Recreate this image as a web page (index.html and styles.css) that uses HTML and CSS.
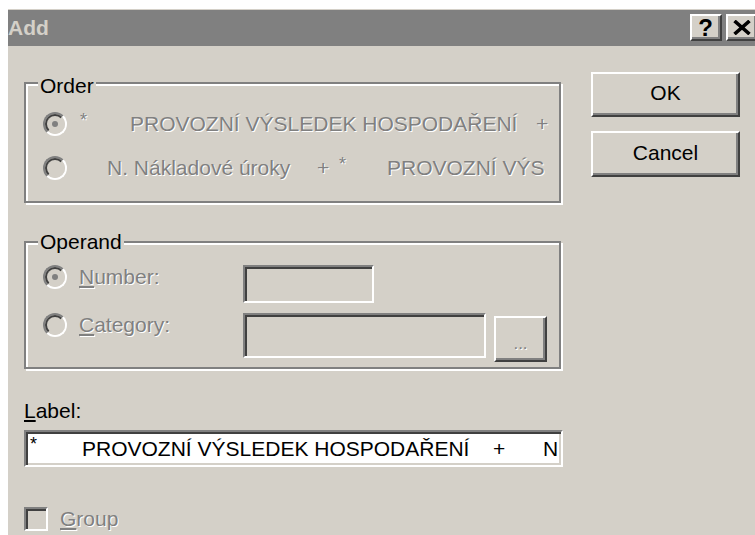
FILE: index.html
```html
<!DOCTYPE html>
<html lang="cs">
<head>
<meta charset="utf-8">
<title>Add</title>
<link rel="stylesheet" href="styles.css">
</head>
<body>
<div class="window">
  <div class="titlebar">
    <span class="title">Add</span>
    <div class="caption-buttons">
      <span class="cap-btn help">?</span>
      <span class="cap-btn close">
        <svg width="18" height="15" viewBox="0 0 18 15" aria-hidden="true">
          <path d="M1.5 1 L16.5 14 M16.5 1 L1.5 14" stroke="#000" stroke-width="3.6" fill="none"/>
        </svg>
      </span>
    </div>
  </div>

  <div class="client">
    <div class="main">
      <fieldset class="group order">
        <legend><span class="legend-text">Order</span></legend>
        <div class="opt">
          <span class="radio checked"><span class="radio-in"></span></span>
          <span class="opt-text">
            <span class="cell w-ast"><span class="ast">*</span></span><span class="cell w-main">PROVOZNÍ VÝSLEDEK HOSPODAŘENÍ</span><span class="cell">+</span>
          </span>
        </div>
        <div class="opt">
          <span class="radio"><span class="radio-in"></span></span>
          <span class="opt-text">
            <span class="cell w-lead"></span><span class="cell w-cost">N. Nákladové úroky</span><span class="cell w-plus">+</span><span class="cell w-ast2"><span class="ast">*</span></span><span class="cell">PROVOZNÍ VÝS</span>
          </span>
        </div>
      </fieldset>

      <fieldset class="group operand">
        <legend>Operand</legend>
        <div class="field-row">
          <div class="choice">
            <span class="radio checked"><span class="radio-in"></span></span>
            <span class="choice-text"><u>N</u>umber:</span>
          </div>
          <span class="edit edit-number"></span>
        </div>
        <div class="field-row second">
          <div class="choice">
            <span class="radio"><span class="radio-in"></span></span>
            <span class="choice-text"><u>C</u>ategory:</span>
          </div>
          <span class="edit edit-category"></span>
          <span class="btn browse"><span class="dots">...</span></span>
        </div>
      </fieldset>

      <div class="caption"><u>L</u>abel:</div>
      <div class="label-field">
        <span class="cell w-ast3"><span class="ast">*</span></span><span class="cell w-main2">PROVOZNÍ VÝSLEDEK HOSPODAŘENÍ</span><span class="cell w-plus2">+</span><span class="cell">N</span>
      </div>

      <div class="check-row">
        <span class="check"></span>
        <span class="check-text"><u>G</u>roup</span>
      </div>
    </div>

    <div class="side">
      <span class="btn push">OK</span>
      <span class="btn push cancel">Cancel</span>
    </div>
  </div>
</div>
</body>
</html>
```

FILE: styles.css
```css
* {
  box-sizing: border-box;
}

html,
body {
  margin: 0;
  height: 100%;
}

body {
  background: #fff;
  overflow: hidden;
  font-family: "Liberation Sans", Arial, sans-serif;
  font-size: 21px;
  line-height: 24px;
  color: #000;
}

/* dialog frame */
.window {
  margin: 9px 0 0 8px;
  width: 750px;
  height: 526px;
  background: #d4d0c8;
  padding-top: 1px;
}

.titlebar {
  height: 36px;
  background: #808080;
  display: flex;
  align-items: flex-start;
  padding-top: 4px;
}

.title {
  align-self: center;
  margin-top: -4px;
  font-weight: bold;
  color: #d4d0c8;
}

.caption-buttons {
  margin-left: auto;
  display: flex;
  gap: 4px;
}

.cap-btn {
  width: 32px;
  height: 27px;
  background: #d4d0c8;
  border: 2px solid;
  border-color: #fff #404040 #404040 #fff;
  box-shadow: inset -2px -2px 0 #808080;
  display: flex;
  align-items: center;
  justify-content: center;
}

.help {
  font-weight: bold;
  font-size: 24px;
  line-height: 1;
  padding-right: 1px;
}

/* client area */
.client {
  display: flex;
}

.main {
  margin-left: 16px;
  width: 539px;
  padding-top: 25px;
}

.side {
  margin-left: 28px;
  padding-top: 26px;
  display: flex;
  flex-direction: column;
  gap: 14px;
}

/* raised push buttons */
.btn {
  background: #d4d0c8;
  border: 2px solid;
  border-color: #fff #404040 #404040 #fff;
  box-shadow: inset -2px -2px 0 #808080;
  display: flex;
  align-items: center;
  justify-content: center;
}

.push {
  width: 149px;
  height: 45px;
  padding-bottom: 3px;
}

.cancel {
  height: 46px;
}

/* etched group boxes */
.group {
  margin: 0;
  width: 537px;
  min-width: 0;
  border: 2px solid #808080;
  box-shadow: inset 2px 2px 0 #fff, 2px 2px 0 #fff;
}

.group legend {
  margin-left: 12px;
  padding: 0 2px;
  line-height: 24px;
  background: #d4d0c8;
}

.legend-text {
  display: inline-block;
  transform: translateY(3px);
}

.order {
  padding: 14px 0 18px 0;
}

.operand {
  margin-top: 27px;
  padding: 11px 0 5px 0;
}

/* radio buttons */
.radio {
  flex: none;
  width: 24px;
  height: 24px;
  border-radius: 50%;
  border: 2px solid;
  border-color: #808080 #fff #fff #808080;
}

.radio-in {
  width: 100%;
  height: 100%;
  border-radius: 50%;
  border: 2px solid;
  border-color: #404040 #d4d0c8 #d4d0c8 #404040;
  background: #d4d0c8;
  display: flex;
  align-items: center;
  justify-content: center;
}

.radio.checked .radio-in::after {
  content: "";
  width: 6px;
  height: 6px;
  border-radius: 50%;
  background: #808080;
}

/* disabled text */
.opt-text,
.choice-text,
.check-text,
.dots {
  color: #808080;
  text-shadow: 1px 1px 0 #fff;
  white-space: nowrap;
}

.opt {
  display: flex;
  align-items: center;
  height: 30px;
  padding-left: 17px;
}

.opt + .opt {
  margin-top: 14px;
}

.opt-text {
  margin-left: 13px;
}

.cell {
  display: inline-block;
}

.ast {
  display: inline-block;
  font-size: 18px;
  transform: translateY(-5px);
}

.w-ast { width: 50px; }
.w-main { width: 406px; }
.w-lead { width: 27px; }
.w-cost { width: 210px; }
.w-plus { width: 22px; }
.w-ast2 { width: 48px; }
.w-ast3 { width: 52px; }
.w-main2 { width: 411px; }
.w-plus2 { width: 50px; }

/* operand rows */
.field-row {
  display: flex;
  align-items: flex-start;
  padding-left: 17px;
}

.field-row.second {
  margin-top: 10px;
}

.choice {
  width: 200px;
  height: 24px;
  display: flex;
  align-items: center;
}

.choice-text {
  margin-left: 12px;
}

/* sunken edit boxes */
.edit,
.label-field {
  border: 2px solid;
  border-color: #808080 #fff #fff #808080;
  box-shadow: inset 2px 2px 0 #404040, inset -2px -2px 0 #d4d0c8;
}

.edit {
  background: #d4d0c8;
}

.edit-number {
  width: 131px;
  height: 38px;
}

.edit-category {
  width: 243px;
  height: 45px;
}

.browse {
  width: 53px;
  height: 46px;
  margin: 3px 0 0 8px;
}

.dots {
  font-size: 17px;
  margin-top: 10px;
}

/* label */
.caption {
  margin-top: 30px;
}

.label-field {
  margin-top: 7px;
  width: 539px;
  height: 37px;
  background: #fff;
  padding-left: 4px;
  display: flex;
  align-items: center;
  white-space: nowrap;
  overflow: hidden;
}

.label-field .cell {
  flex: none;
}

/* group check box */
.check-row {
  margin-top: 40px;
  display: flex;
  align-items: center;
}

.check {
  width: 24px;
  height: 24px;
  border: 2px solid;
  border-color: #808080 #fff #fff #808080;
  box-shadow: inset 2px 2px 0 #404040, inset -2px -2px 0 #d4d0c8;
  background: #d4d0c8;
}

.check-text {
  margin-left: 12px;
}
```
